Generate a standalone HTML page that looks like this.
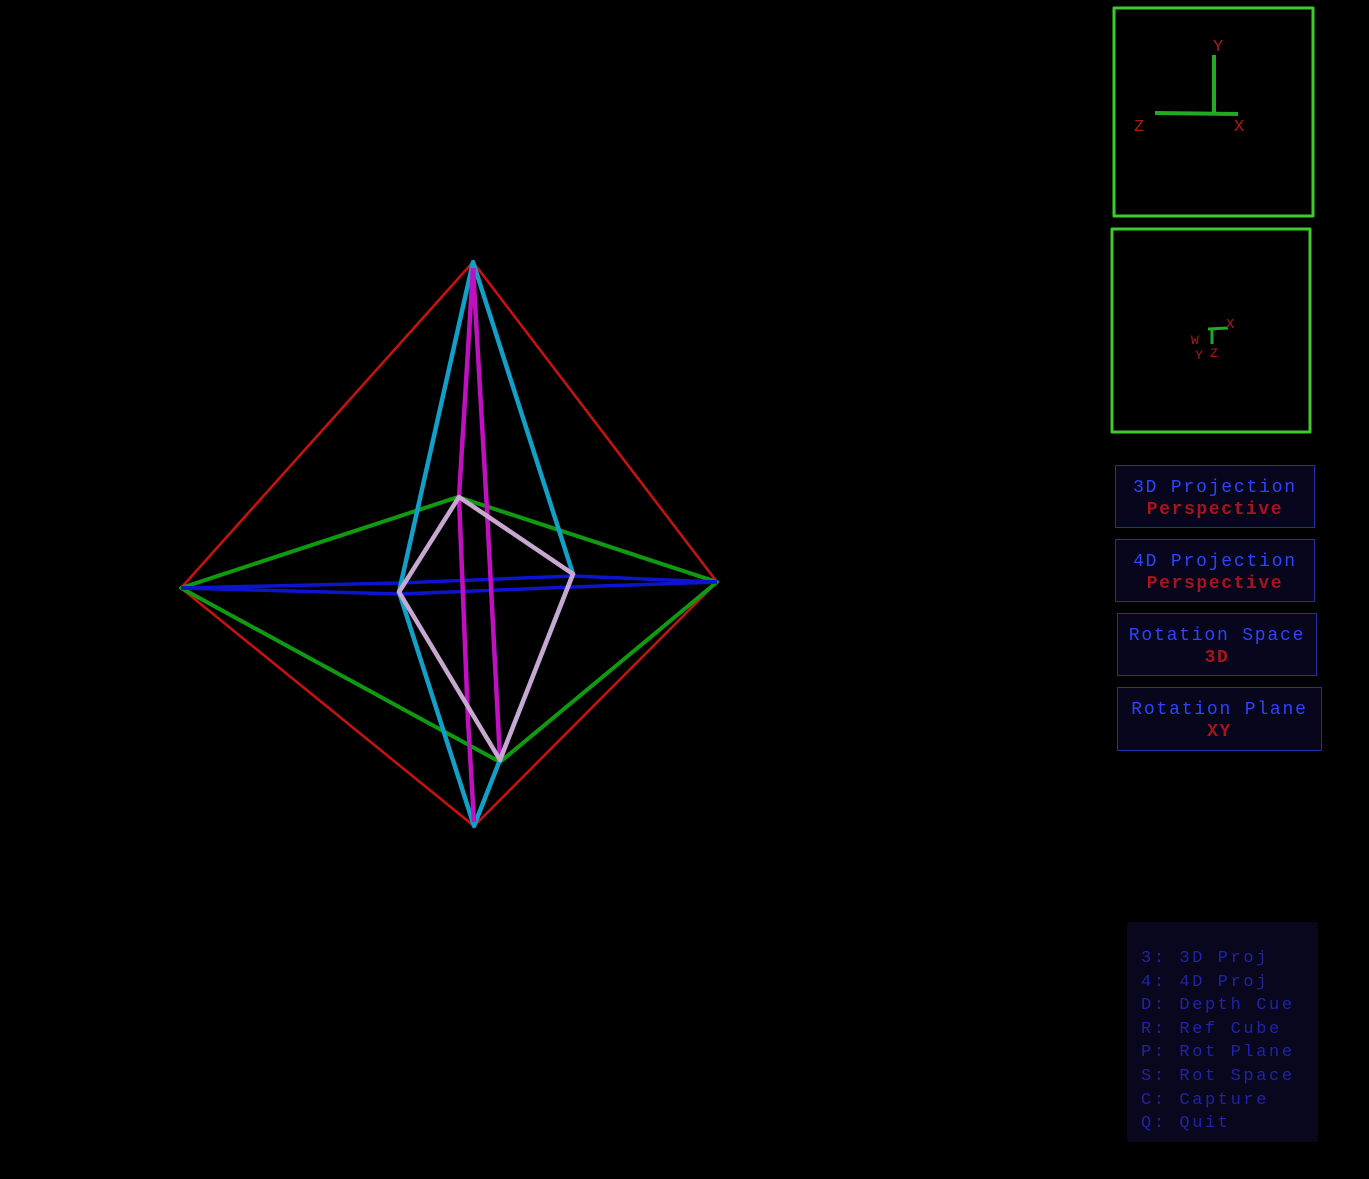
<!DOCTYPE html>
<html><head><meta charset="utf-8"><style>
html,body{margin:0;padding:0;background:#000;width:1369px;height:1179px;overflow:hidden;position:relative;font-family:"Liberation Mono",monospace}
.box{position:absolute;left:1115px;width:198px;border:1px solid #1f2fa8;background:#07061c;text-align:center;}
.t{color:#2d44ff;font-size:18px;letter-spacing:1.8px;margin-top:11px;line-height:22px}
.v{color:#a8141c;font-size:18px;font-weight:bold;letter-spacing:1.6px;line-height:22px}
.help{position:absolute;left:1127px;top:922px;width:191px;height:220px;background:#08071e;color:#2222a8;font-size:17px;letter-spacing:2.6px;line-height:23.6px;padding-top:25px;box-sizing:border-box;padding-left:14px;white-space:pre}
</style></head><body>
<svg width="1369" height="1179" style="position:absolute;left:0;top:0">
<g fill="none" stroke-linejoin="round">
<polygon points="473,262 181,588 474,826 717,582" stroke="#cc1010" stroke-width="2.5"/>
<polygon points="181,588 458,497 717,582 500,762" stroke="#109a10" stroke-width="4"/>
<polyline points="181,588 400,583 573,576 717,582" stroke="#0c14d0" stroke-width="3.5"/>
<polyline points="181,588 400,594 573,587 717,582" stroke="#0c14d0" stroke-width="3.5"/>
<polygon points="473,262 399,592 474,826 573,574" stroke="#10a0c8" stroke-width="4.5"/>
<polyline points="473,268 459,497 468,720 474,822" stroke="#c010c0" stroke-width="4.5"/>
<polyline points="473,268 487,510 500,760" stroke="#c010c0" stroke-width="4.5"/>
<polygon points="459,497 399,592 500,760 573,574" stroke="#c8a8d0" stroke-width="4.5"/>
<rect x="1114" y="8" width="199" height="208" stroke="#3ccc2c" stroke-width="3"/>
<rect x="1112" y="229" width="198" height="203" stroke="#3ccc2c" stroke-width="3"/>
<line x1="1214" y1="55" x2="1214" y2="112" stroke="#22aa22" stroke-width="4"/>
<line x1="1155" y1="113" x2="1238" y2="114" stroke="#22aa22" stroke-width="4"/>
<line x1="1208" y1="329" x2="1228" y2="328" stroke="#22aa22" stroke-width="3"/>
<line x1="1212" y1="329" x2="1212" y2="344" stroke="#22aa22" stroke-width="3"/>
</g>
<g fill="#b01818" font-family="Liberation Mono,monospace" font-size="17">
<text x="1213" y="51">Y</text><text x="1134" y="131">Z</text><text x="1234" y="131">X</text>
<text x="1226" y="328" font-size="14">X</text><text x="1191" y="344" font-size="13">W</text><text x="1195" y="359" font-size="13">Y</text><text x="1210" y="357" font-size="13">Z</text>
</g>
</svg>
<div class="box" style="top:465px;height:61px"><div class="t">3D Projection</div><div class="v">Perspective</div></div>
<div class="box" style="top:539px;height:61px"><div class="t">4D Projection</div><div class="v">Perspective</div></div>
<div class="box" style="top:613px;height:61px;left:1117px"><div class="t">Rotation Space</div><div class="v">3D</div></div>
<div class="box" style="top:687px;height:62px;left:1117px;width:203px"><div class="t">Rotation Plane</div><div class="v">XY</div></div>
<div class="help">3: 3D Proj
4: 4D Proj
D: Depth Cue
R: Ref Cube
P: Rot Plane
S: Rot Space
C: Capture
Q: Quit</div>
</body></html>
